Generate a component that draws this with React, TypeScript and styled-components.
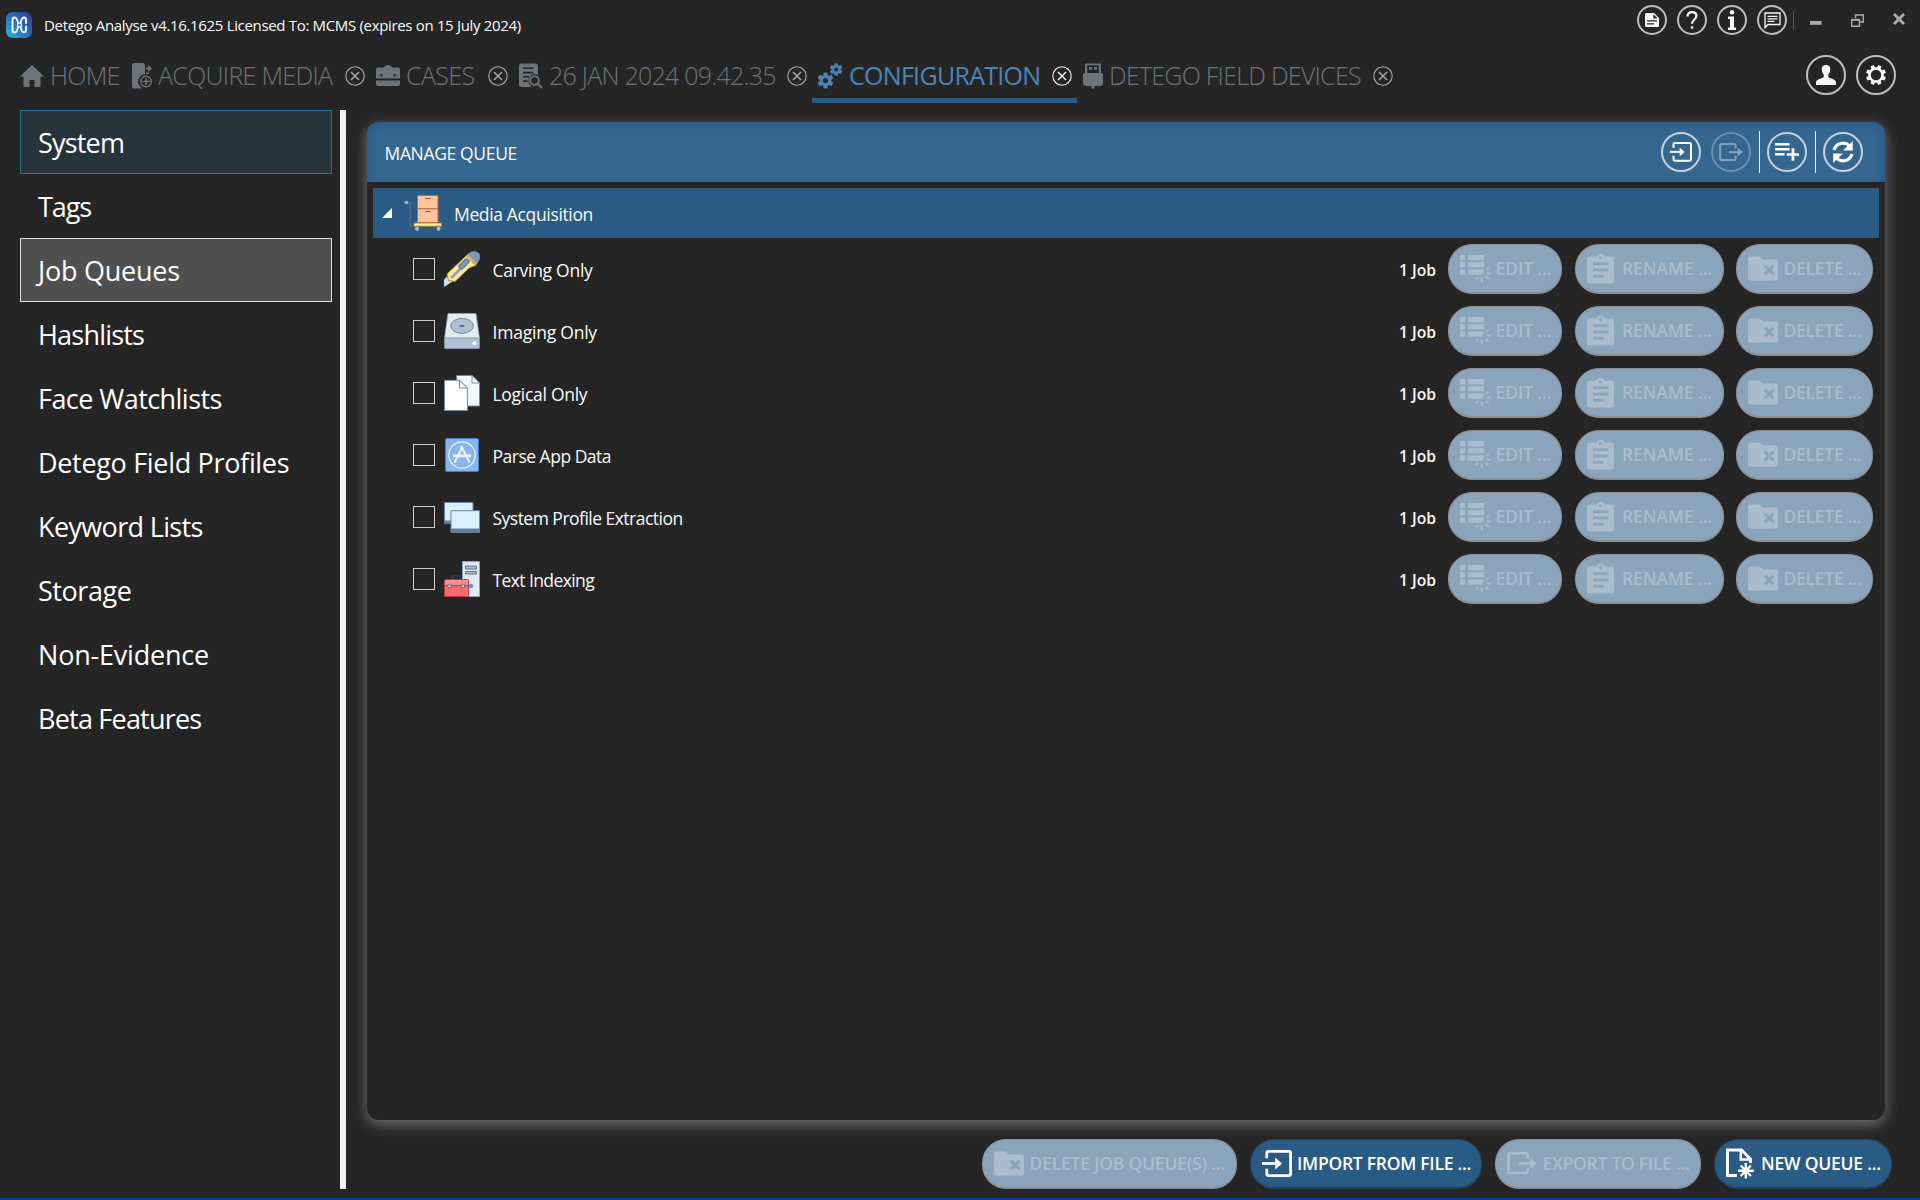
import React from "react";
import styled, { createGlobalStyle, css } from "styled-components";

const GlobalStyle = createGlobalStyle`
  * { box-sizing: border-box; }
  body {
    margin: 0;
    background: #252525;
    color: #fafafa;
    font-family: "Open Sans", "Noto Sans", sans-serif;
    overflow: hidden;
  }
  svg { display: block; flex: none; }
`;

const Window = styled.div`
  width: 1920px;
  height: 1200px;
  display: flex;
  flex-direction: column;
  background: #252525;
  border-bottom: 2px solid #0b3cae;
`;

const Text = styled.span<{ $track?: number }>`
  white-space: nowrap;
  letter-spacing: ${(p) => p.$track ?? 0}px;
`;

/* ---------- title bar ---------- */
const TitleBar = styled.header`
  height: 50px;
  flex: none;
  display: flex;
  justify-content: space-between;
  padding: 0 15px 0 6px;
`;
const Brand = styled.div`
  display: flex;
  align-items: center;
  gap: 12px;
  font-size: 15px;
`;
const WindowTools = styled.div`
  height: 40px;
  display: flex;
  align-items: center;
  gap: 10px;
`;
const Ring = styled.button<{ $size: number; $dim?: boolean }>`
  width: ${(p) => p.$size}px;
  height: ${(p) => p.$size}px;
  flex: none;
  padding: 0;
  display: grid;
  place-items: center;
  border: 2px solid rgba(255, 255, 255, 0.7);
  border-radius: 50%;
  background: transparent;
  color: #fafafa;
  opacity: ${(p) => (p.$dim ? 0.4 : 1)};
`;
const WindowButtons = styled.div`
  display: flex;
  align-items: center;
  margin-left: -4px;
  color: #aaa;
  svg + svg { margin-left: 29px; }
`;
const ToolDivider = styled.span`
  width: 1px;
  height: 19px;
  margin-right: 16px;
  background: #5c5c5c;
`;

/* ---------- tab strip ---------- */
const TabBar = styled.nav`
  height: 60px;
  flex: none;
  display: flex;
  justify-content: space-between;
  padding: 0 24px 0 14px;
`;
const Tabs = styled.div`
  display: flex;
  padding-top: 4px;
`;
const Tab = styled.div<{ $width: number; $active?: boolean }>`
  width: ${(p) => p.$width}px;
  height: 49px;
  display: flex;
  align-items: center;
  gap: 6px;
  padding: 0 5px 0 6px;
  border-bottom: 5px solid ${(p) => (p.$active ? "#2a5b84" : "transparent")};
  color: ${(p) => (p.$active ? "#4b84b8" : "#6e7479")};
  font-size: 25px;
  font-weight: ${(p) => (p.$active ? 400 : 300)};
  line-height: 1;
`;
const TabLabel = styled(Text)`
  padding-bottom: 2px;
`;
const TabClose = styled.span<{ $active?: boolean }>`
  margin-left: auto;
  color: ${(p) => (p.$active ? "#f0f0f0" : "#a8a8a8")};
`;
const AccountTools = styled.div`
  display: flex;
  gap: 10px;
  padding-top: 5px;
`;

/* ---------- body ---------- */
const Body = styled.div`
  flex: 1;
  display: flex;
  min-height: 0;
`;
const Sidebar = styled.aside`
  width: 346px;
  height: 1079px;
  flex: none;
  padding: 0 8px 0 20px;
  border-right: 6px solid #f0f0f0;
`;
const SideItem = styled.div<{ $state?: "selected" | "hover" }>`
  height: 64px;
  display: flex;
  align-items: center;
  padding-left: 17px;
  border: 1px solid transparent;
  font-size: 27px;
  color: #fff;
  ${(p) => p.$state === "hover" && css`background: #27343b; border-color: #26769c;`}
  ${(p) => p.$state === "selected" && css`background: #505050; border-color: #dcdcdc;`}
`;
const Main = styled.main`
  flex: 1;
  display: flex;
  flex-direction: column;
  padding: 12px 28px 0 21px;
`;
const Panel = styled.section`
  height: 998px;
  margin-right: 7px;
  border-radius: 12px;
  background: #252525;
  box-shadow: 0 4px 14px rgba(150, 150, 150, 0.7);
`;
const PanelHeader = styled.div`
  height: 60px;
  display: flex;
  align-items: center;
  justify-content: space-between;
  padding: 0 22px 0 17.5px;
  border-radius: 12px 12px 0 0;
  background: #356690;
  box-shadow: inset 0 5px 10px -3px #2a5b84, inset 5px 0 9px -5px #2a5b84, inset -5px 0 9px -5px #2a5b84;
  font-size: 17.5px;
`;
const PanelTitle = styled(Text)`
  padding-top: 2px;
`;
const PanelTools = styled.div`
  display: flex;
  align-items: center;
  gap: 10px;
`;
const PanelDivider = styled.span`
  width: 1px;
  height: 42px;
  margin: 0 -3px 0 -2px;
  background: #f4f4f4;
`;
const QueueList = styled.div`
  padding: 6px 6px 0;
`;
const GroupRow = styled.div`
  height: 50px;
  display: flex;
  align-items: center;
  padding-left: 9px;
  background: #2a5b84;
  font-size: 17.5px;
  svg + svg { margin: 0 12px 0 12px; }
`;
const Row = styled.div`
  height: 62px;
  display: flex;
  align-items: center;
  padding: 0 6px 0 40px;
  font-size: 17.5px;
`;
const Checkbox = styled.span`
  width: 22px;
  height: 22px;
  margin-right: 9px;
  border: 1px solid #cfcfcf;
`;
const RowName = styled.span`
  flex: 1;
  padding: 2px 0 0 12.5px;
`;
const JobCount = styled.span`
  padding-top: 2px;
  margin-right: 12px;
  font-size: 15.7px;
  font-weight: 600;
`;
const RowActions = styled.div`
  display: flex;
  gap: 12.5px;
`;
const Pill = styled.button<{ $width: number; $gap?: number; $primary?: boolean }>`
  width: ${(p) => p.$width}px;
  height: 50px;
  flex: none;
  display: flex;
  align-items: center;
  gap: ${(p) => p.$gap ?? 5.5}px;
  padding: 0 0 1px 11px;
  border: 1px solid;
  border-radius: 24px;
  font: 600 17.5px "Open Sans", "Noto Sans", sans-serif;
  ${(p) =>
    p.$primary
      ? css`background: #2a5b84; border-color: #264358; border-bottom-width: 2px; color: #fff;`
      : css`background: #8aa4bc; border-color: #8e9194; border-bottom-width: 2px; color: #abbdcd;`}
`;
const Footer = styled.footer`
  display: flex;
  justify-content: flex-end;
  gap: 13px;
  padding-top: 19px;
`;

/* ---------- icons ---------- */
const LogoIcon = () => (
  <svg width="26" height="26" viewBox="0 0 26 26">
    <defs>
      <linearGradient id="logo" x1="0" y1="1" x2="1" y2="0">
        <stop offset="0" stopColor="#27b4ea" />
        <stop offset=".5" stopColor="#2a70bd" />
        <stop offset="1" stopColor="#38348c" />
      </linearGradient>
    </defs>
    <rect width="26" height="26" rx="6.5" fill="url(#logo)" />
    <g fill="none" stroke="#f5faff" strokeWidth="1.9" strokeLinecap="round" strokeLinejoin="round">
      <path d="M6.500 18V8c0-3.300 3.500-3.300 4.500-.5.8 2.500 1 3.800 2.500 5.300s1.300 3.200 2 5.200c1 3.300 4.500 3 4.500 0v-3.500" />
      <path d="M6.500 18c0 3.300 3.500 3.300 4.500.5.800-2.500 1-4.200 2.500-5.700s1.300-3 2-5c1-3.300 4.500-3 4.500 0V11" />
    </g>
    <circle cx="13.500" cy="13" r="1.900" fill="#2b6cb8" stroke="#f5faff" strokeWidth="1.300" />
  </svg>
);
const HomeIcon = () => (
  <svg width="24" height="22" viewBox="0 0 24 22" fill="currentColor">
    <path d="M12 0 24 11.500h-3.500V22h-6v-7h-5v7h-6V11.500H0z" />
  </svg>
);
const AcquireIcon = () => (
  <svg width="20" height="26" viewBox="0 0 20 26" fill="currentColor">
    <path d="M2.500 0h8A2.500 2.500 0 0 1 13 2.500V11.500A7 7 0 0 0 9.500 24.500V25.500H2.500A2.500 2.500 0 0 1 0 23V2.500A2.500 2.500 0 0 1 2.500 0z" />
    <path d="M14 4.500h2V2L20 5.500 16 9V6.500h-2zM14 9.500h3v1.500h-3z" />
    <circle cx="14" cy="18.500" r="5.300" fill="none" stroke="currentColor" strokeWidth="1.400" />
    <path d="M13.200 15h1.600v2.700h2.700v1.600h-2.700V22h-1.600v-2.700h-2.700v-1.600h2.700z" />
  </svg>
);
const CaseIcon = () => (
  <svg width="24" height="22" viewBox="0 0 24 22" fill="currentColor">
    <path fillRule="evenodd" d="M8 2.500Q8 1 9.500 1h1V0h3v1h1Q16 1 16 2.500h6a2 2 0 0 1 2 2V13.500H0v-9a2 2 0 0 1 2-2zM4.500 9v2.500h1.800V9zM17.700 9v2.500h1.800V9z" />
    <path d="M0 15.500h24V19a2 2 0 0 1-2 2H2a2 2 0 0 1-2-2z" />
  </svg>
);
const ReportIcon = () => (
  <svg width="24" height="26" viewBox="0 0 24 26" fill="currentColor">
    <path fillRule="evenodd" d="M2.500.5h14A2.500 2.500 0 0 1 19 3v9a6.500 6.500 0 0 0-7.500 10.500l1 1.500h-10A2.500 2.500 0 0 1 0 21.500V3A2.500 2.500 0 0 1 2.500.5zM4 4.500v1.600h10.500V4.500zM4 8.800v1.600h10.500V8.800zM4 13v1.600h6V13zM4 17.300v1.600h4.500v-1.600z" />
    <circle cx="15.500" cy="17.500" r="4.300" fill="none" stroke="currentColor" strokeWidth="2" />
    <path d="m18.500 20.500 4.500 4.500" stroke="currentColor" strokeWidth="2.200" />
  </svg>
);
const Cog = ({ x, y, s }: { x: number; y: number; s: number }) => (
  <g transform={`translate(${x} ${y}) scale(${s})`}>
    <circle r="4" fill="none" stroke="currentColor" strokeWidth="3" />
    {[0, 60, 120, 180, 240, 300].map((a) => (
      <path key={a} d="M-1.800-7.600h3.600l.6 3.200h-4.800z" fill="currentColor" transform={`rotate(${a})`} />
    ))}
  </g>
);
const CogsIcon = () => (
  <svg width="25" height="26" viewBox="0 0 25 26">
    <Cog x={7.5} y={17.5} s={1.05} />
    <Cog x={18.2} y={6.5} s={0.83} />
  </svg>
);
const UsbIcon = () => (
  <svg width="20" height="26" viewBox="0 0 20 26" fill="currentColor">
    <path fillRule="evenodd" d="M2 .5h16V10h.3a2 2 0 0 1 1.700 2v8a3 3 0 0 1-3 3h-5.500v2.500h-3V23H3a3 3 0 0 1-3-3v-8a2 2 0 0 1 2-2zM4.200 2.300V10h11.600V2.300zM6 4h3v2.700H6zM11 4h3v2.700h-3z" />
  </svg>
);
const CloseIcon = () => (
  <svg width="20" height="20" viewBox="0 0 20 20" fill="none" stroke="currentColor">
    <circle cx="10" cy="10" r="9.200" strokeWidth="1.100" />
    <path d="m6 6 8 8M14 6l-8 8" strokeWidth="1.500" />
  </svg>
);
const NoteIcon = () => (
  <svg width="14" height="14" viewBox="0 0 14 14" fill="currentColor">
    <path fillRule="evenodd" d="M1.500 0H9l5 5v7.500a1.500 1.500 0 0 1-1.500 1.500h-11A1.500 1.500 0 0 1 0 12.500v-11A1.500 1.500 0 0 1 1.500 0zM8.300 1.200V5.600h4.400zM2 7.200v1.300h10V7.200zM2 10.300v1.300h7v-1.300z" />
  </svg>
);
const HelpIcon = () => (
  <svg width="12" height="19" viewBox="0 0 12 19" fill="none" stroke="currentColor" strokeWidth="2.300">
    <path d="M1.500 5.500C1.500 2.700 3.300 1.200 6 1.200s4.400 1.500 4.400 3.800c0 3.300-4.400 3.800-4.400 7.800" />
    <path d="M4.800 16.500h2.500" strokeWidth="2.400" />
  </svg>
);
const InfoIcon = () => (
  <svg width="10" height="20" viewBox="0 0 10 20" fill="currentColor">
    <circle cx="5" cy="2.200" r="2.200" />
    <path d="M1 6.500h6V17.500h2V20H1v-2.500h2V9H1z" />
  </svg>
);
const ChatIcon = () => (
  <svg width="17" height="17" viewBox="0 0 17 17" fill="none" stroke="currentColor">
    <path d="M1 1h15v11.500H4L1 15.800z" strokeWidth="1.300" />
    <path d="M3.500 4.300h10M3.500 6.800h10M3.500 9.300h7" strokeWidth="1.200" />
  </svg>
);
const MinimiseIcon = () => (
  <svg width="12" height="13" viewBox="0 0 12 13"><path d="M0 7h11.500v3.800H0z" fill="currentColor" /></svg>
);
const RestoreIcon = () => (
  <svg width="13" height="13" viewBox="0 0 13 13" fill="none" stroke="currentColor">
    <path d="M4.500 4V.9H12.400V8H9" strokeWidth="1.500" />
    <path d="M.7 5.700h7.800v6.500H.7z" strokeWidth="1.400" />
    <path d="M.5 5.800h8" strokeWidth="2" />
  </svg>
);
const QuitIcon = () => (
  <svg width="12" height="15" viewBox="0 0 12 15"><path d="m1 1 10 10M11 1 1 11" stroke="currentColor" strokeWidth="3" /></svg>
);
const UserIcon = () => (
  <svg width="20" height="20" viewBox="0 0 20 20" fill="currentColor">
    <path d="M10 0c3 0 4.500 2 4.300 4.800C14.100 7.500 13 8.800 12.300 9.600v2.400c1 1.500 7.700 2 7.700 5.500V20H0v-2.500C0 14 6.700 13.500 7.700 12V9.600C7 8.800 5.900 7.500 5.700 4.800 5.500 2 7 0 10 0z" />
  </svg>
);
const GearIcon = () => (
  <svg width="20" height="20" viewBox="-10 -10 20 20">
    <circle r="6.500" fill="none" stroke="currentColor" strokeWidth="2.600" />
    {[22.5, 67.5, 112.5, 157.5, 202.5, 247.5, 292.5, 337.5].map((a) => (
      <path key={a} d="M-1.700-10h3.400l.4 3.200h-4.200z" fill="currentColor" transform={`rotate(${a})`} />
    ))}
  </svg>
);
const ImportIcon = ({ size = 22 }: { size?: number }) => (
  <svg width={size} height={size * 0.9} viewBox="0 0 30 27" fill="none" stroke="currentColor">
    <path d="M4.800 8.200V3.200Q4.800 1.400 6.600 1.400H26.800Q28.600 1.400 28.600 3.200V23.800Q28.600 25.600 26.800 25.600H6.600Q4.800 25.600 4.800 23.800V18.800" strokeWidth="2.800" />
    <path d="M0 13.500h15" strokeWidth="2.800" />
    <path d="M13.200 7.500 20 13.500l-6.800 6z" fill="currentColor" stroke="none" />
  </svg>
);
const ExportIcon = ({ size = 24 }: { size?: number }) => (
  <svg width={size} height={size * 0.76} viewBox="0 0 30 23" fill="none" stroke="currentColor">
    <path d="M20.700 7V3Q20.700 1.300 19 1.300H3Q1.300 1.300 1.300 3V19.800Q1.300 21.500 3 21.500H19Q20.700 21.500 20.700 19.800V16" strokeWidth="2.600" />
    <path d="M12 11.500h13" strokeWidth="2.600" />
    <path d="M23.500 6 30 11.500 23.500 17z" fill="currentColor" stroke="none" />
  </svg>
);
const AddListIcon = () => (
  <svg width="24" height="18" viewBox="0 0 24 18" fill="currentColor">
    <path d="M0 0h14.500v2.500H0zM0 5h14.500v2.500H0zM0 10h9.500v2.500H0zM16.600 5.200h2.700v5H24v2.600h-4.700v5h-2.700v-5h-4.800v-2.600h4.800z" />
  </svg>
);
const RefreshIcon = () => (
  <svg width="22" height="24" viewBox="0 0 22 24">
    <g fill="none" stroke="currentColor" strokeWidth="3.200">
      <path d="M2 10A9.200 9.200 0 0 1 17.500 6" />
      <path d="M20 14A9.200 9.200 0 0 1 4.500 18" />
    </g>
    <path d="M20.800 1v9.500H11zM1.200 23v-9.500H11z" fill="currentColor" />
  </svg>
);
const EditIcon = () => (
  <svg width="31" height="27" viewBox="0 0 31 27" fill="currentColor">
    <path d="M0 0h5.200v5.200H0zM8 0h16v5.200H8zM0 7.300h5.200v5H0zM8 7.300h16v5H8zM0 14.500h5.200v5.200H0zM8 14.500h16v2.200l-1.500 3H8z" />
    <path d="m26.200 15 2.300-2.200M27 18.500h3.500M26 21.800l2.500 2.200M21.800 22.800V27M18 22l-2.300 2.500" stroke="currentColor" strokeWidth="2" />
  </svg>
);
const RenameIcon = () => (
  <svg width="27" height="31" viewBox="0 0 27 31" fill="currentColor">
    <path fillRule="evenodd" d="M2.500 3.500H9.500a4.200 4.200 0 0 1 8 0h7a2.500 2.500 0 0 1 2.500 2.500v22a2.500 2.500 0 0 1-2.500 2.500h-22A2.500 2.500 0 0 1 0 28V6a2.500 2.500 0 0 1 2.500-2.500zM13.500 3a1.600 1.600 0 1 0 0 3.200 1.600 1.600 0 0 0 0-3.200zM6 9.300v3h15.500v-3zM6 15.500v3h15.500v-3zM6 21.700v3h10.500v-3z" />
  </svg>
);
const DeleteIcon = () => (
  <svg width="30" height="25" viewBox="0 0 30 25" fill="currentColor">
    <path fillRule="evenodd" d="M2.500.5H11.500L15 3.500H27.500A2.500 2.500 0 0 1 30 6V22a2.500 2.500 0 0 1-2.500 2.500h-25A2.500 2.500 0 0 1 0 22V3A2.500 2.500 0 0 1 2.500.5zM15.700 10.800l3.200 3.200-3.200 3.200 2.300 2.300 3.200-3.200 3.200 3.200 2.300-2.300-3.200-3.200 3.200-3.200-2.300-2.300-3.200 3.200L18 8.500z" />
  </svg>
);
const NewIcon = () => (
  <svg width="29" height="31" viewBox="0 0 29 31" fill="none" stroke="currentColor">
    <path d="M11 27.500H1.500V2H15.500L24.500 11v4" strokeWidth="2.900" />
    <path d="M14.800 2v9.500H24.500" strokeWidth="2.500" />
    <path d="M19.800 15v15.500M12 22.700h15.800M14.700 17.500l10.200 10.500M24.900 17.500l-10.200 10.500" strokeWidth="2.400" />
  </svg>
);
const ExpanderIcon = () => (
  <svg width="10" height="10" viewBox="0 0 10 10"><path d="M10 0v10H0z" fill="#fafafa" /></svg>
);
const TrolleyIcon = () => (
  <svg width="38" height="36" viewBox="0 0 38 36">
    <path d="M2.500 7.500H6V29q0 2 2.500 2h2" fill="none" stroke="#56718d" strokeWidth="1.200" />
    <circle cx="2.300" cy="7.500" r="1.800" fill="#a5b7ca" />
    <path d="M13.500.5h20.500v27H13.500z" fill="#ffc49c" stroke="#b86b46" />
    <path d="M13.500 13.700h20.500M21 3.500h6M21 16.500h6" stroke="#a85c3a" strokeWidth="1.100" />
    <path d="M10 28h27.500v3.200H10z" fill="#fff0a0" stroke="#b58a2c" strokeWidth=".9" />
    <circle cx="13" cy="33.800" r="2.100" fill="#a9bdd3" />
    <circle cx="34.500" cy="33.800" r="2.100" fill="#a9bdd3" />
  </svg>
);
const KnifeIcon = () => (
  <svg width="36" height="36" viewBox="0 0 36 36">
    <path d="M0 28.500 3.500 25l5 5.500L0 36z" fill="#c9dcea" />
    <path d="M3 23 22.500 4.500 31.500 14.500 25 17 11 30.500 4.500 29.500z" fill="#ffe9a0" stroke="#b08a33" strokeWidth="1" strokeLinejoin="round" />
    <path d="M22.500 4.500Q26 0 31 .3q5 1 5 5.200 0 4.500-4.500 9z" fill="#7f99b5" />
    <path d="M22.500 4.500 31.500 14.500l1.500-1.700-9-9.500z" fill="#e0b44c" />
    <path d="M8 26 19 15.500" stroke="#92a9bf" strokeWidth="3" strokeLinecap="round" />
    <path d="m17.500 15.500 5-5" stroke="#5a7390" strokeWidth="6" strokeLinecap="round" />
    <path d="m17.500 15.500 5-5" stroke="#7f99b5" strokeWidth="3.800" strokeLinecap="round" />
  </svg>
);
const DiskIcon = () => (
  <svg width="36" height="36" viewBox="0 0 36 36">
    <path d="M5 .5h26q1 0 1.200 1L35.500 25H.5L3.800 1.500Q4 .5 5 .5z" fill="#e1edf3" stroke="#8ea2b5" strokeWidth=".7" />
    <path d="M.4 25h35.200v9.500q0 1.200-1.200 1.200H1.600Q.4 35.700.4 34.500z" fill="#b1c1d5" stroke="#8092a8" strokeWidth=".7" />
    <ellipse cx="18" cy="12.900" rx="11.300" ry="7.500" fill="#b1c1d5" stroke="#71869d" />
    <ellipse cx="18" cy="12.900" rx="2.600" ry="1.200" fill="#60758c" />
    <circle cx="30.500" cy="30.200" r="2" fill="#fff" />
  </svg>
);
const PagesIcon = () => (
  <svg width="36" height="36" viewBox="0 0 36 36" stroke="#73899f">
    <path d="M12.700.5H28l7.500 7.500v23H12.700z" fill="#f1f9ff" />
    <path d="M28 .5V8h7.500z" fill="#fff" />
    <path d="M.5 5.300H15.500L23.400 13v22.500H.5z" fill="#fff" />
    <path d="M15.500 5.300V13h7.900z" fill="#fff" />
  </svg>
);
const AppIcon = () => (
  <svg width="36" height="36" viewBox="0 0 36 36">
    <rect x="1.500" y="1.500" width="33" height="33" rx="1.500" fill="#87b5ef" stroke="#467fc8" />
    <g fill="none" stroke="#eef6ff">
      <circle cx="18" cy="18" r="13.200" strokeWidth="1.200" />
      <path d="m10.500 25.500 8-15.500M17 9l8.500 16.500" strokeWidth="2" />
      <path d="M9 18.800h18" strokeWidth="2.800" />
    </g>
  </svg>
);
const ScreensIcon = () => (
  <svg width="36" height="36" viewBox="0 0 36 36">
    <path d="M.5 3.500h28.500v21H.5z" fill="#d9f0ff" stroke="#6f879f" />
    <path d="M0 21.500h7v3.500H0z" fill="#66809a" />
    <path d="M7 11.700h28.500v21.500H7z" fill="#d9f0ff" stroke="#6f879f" />
    <path d="M6.500 29.500H36v4H6.500z" fill="#66809a" />
  </svg>
);
const ToolboxIcon = () => (
  <svg width="36" height="36" viewBox="0 0 36 36">
    <path d="M18.500.5h17v35h-17z" fill="#dfeaf1" stroke="#8ba0b5" />
    <path d="M21.500 5h11v3h-11zM21.500 10.500h11v2.500h-11z" fill="#a9bbcd" stroke="#54708e" strokeWidth=".9" />
    <path d="M8.500 18.500v-3.700h7.500v3.700" fill="none" stroke="#343c48" strokeWidth="1.700" />
    <path d="M.5 20q0-1.500 1.500-1.500h21q1.500 0 1.500 1.500v15.500H.5z" fill="#f96a6c" stroke="#b9383c" strokeWidth=".9" />
    <path d="M1 20q0-1 1-1h21q1 0 1 1v4.500H1z" fill="#f98e8d" />
    <path d="M.5 24.700h24" stroke="#b9383c" />
    <path d="M4 23.300h3v3.200H4zM17.500 23.300h3v3.200h-3z" fill="#b7d3e6" stroke="#4d6e8d" strokeWidth=".8" />
    <circle cx="27" cy="25" r="2.300" fill="#5e93d8" />
  </svg>
);

/* ---------- data ---------- */
type Tracked = { label: string; track: number };
const tabs: (Tracked & { width: number; icon: React.ReactNode; closable?: boolean; active?: boolean })[] = [
  { label: "HOME", track: -0.7, width: 112, icon: <HomeIcon /> },
  { label: "ACQUIRE MEDIA", track: -0.7, width: 244, icon: <AcquireIcon />, closable: true },
  { label: "CASES", track: -0.6, width: 143, icon: <CaseIcon />, closable: true },
  { label: "26 JAN 2024 09.42.35", track: -0.75, width: 299, icon: <ReportIcon />, closable: true },
  { label: "CONFIGURATION", track: -0.7, width: 265, icon: <CogsIcon />, closable: true, active: true },
  { label: "DETEGO FIELD DEVICES", track: -0.75, width: 321, icon: <UsbIcon />, closable: true },
];
const sections: (Tracked & { state?: "selected" | "hover" })[] = [
  { label: "System", track: -0.8, state: "hover" },
  { label: "Tags", track: -1.1 },
  { label: "Job Queues", track: -0.25, state: "selected" },
  { label: "Hashlists", track: -0.8 },
  { label: "Face Watchlists", track: -0.55 },
  { label: "Detego Field Profiles", track: -0.32 },
  { label: "Keyword Lists", track: -0.65 },
  { label: "Storage", track: -0.45 },
  { label: "Non-Evidence", track: -0.2 },
  { label: "Beta Features", track: -0.78 },
];
const queues: (Tracked & { icon: React.ReactNode })[] = [
  { label: "Carving Only", track: -0.28, icon: <KnifeIcon /> },
  { label: "Imaging Only", track: -0.22, icon: <DiskIcon /> },
  { label: "Logical Only", track: -0.28, icon: <PagesIcon /> },
  { label: "Parse App Data", track: -0.5, icon: <AppIcon /> },
  { label: "System Profile Extraction", track: -0.52, icon: <ScreensIcon /> },
  { label: "Text Indexing", track: -0.6, icon: <ToolboxIcon /> },
];

export default function App() {
  return (
    <>
      <GlobalStyle />
      <Window>
        <TitleBar>
          <Brand>
            <LogoIcon />
            <Text $track={-0.33}>Detego Analyse v4.16.1625 Licensed To: MCMS (expires on 15 July 2024)</Text>
          </Brand>
          <WindowTools>
            <Ring $size={30}><NoteIcon /></Ring>
            <Ring $size={30}><HelpIcon /></Ring>
            <Ring $size={30}><InfoIcon /></Ring>
            <Ring $size={30}><ChatIcon /></Ring>
            <WindowButtons>
              <ToolDivider />
              <MinimiseIcon />
              <RestoreIcon />
              <QuitIcon />
            </WindowButtons>
          </WindowTools>
        </TitleBar>

        <TabBar>
          <Tabs>
            {tabs.map((t) => (
              <Tab key={t.label} $width={t.width} $active={t.active}>
                {t.icon}
                <TabLabel $track={t.track}>{t.label}</TabLabel>
                {t.closable && <TabClose $active={t.active}><CloseIcon /></TabClose>}
              </Tab>
            ))}
          </Tabs>
          <AccountTools>
            <Ring $size={40}><UserIcon /></Ring>
            <Ring $size={40}><GearIcon /></Ring>
          </AccountTools>
        </TabBar>

        <Body>
          <Sidebar>
            {sections.map((s) => (
              <SideItem key={s.label} $state={s.state}><Text $track={s.track}>{s.label}</Text></SideItem>
            ))}
          </Sidebar>
          <Main>
            <Panel>
              <PanelHeader>
                <PanelTitle $track={-0.35}>MANAGE QUEUE</PanelTitle>
                <PanelTools>
                  <Ring $size={40}><ImportIcon /></Ring>
                  <Ring $size={40} $dim><ExportIcon /></Ring>
                  <PanelDivider />
                  <Ring $size={40}><AddListIcon /></Ring>
                  <PanelDivider />
                  <Ring $size={40}><RefreshIcon /></Ring>
                </PanelTools>
              </PanelHeader>
              <QueueList>
                <GroupRow>
                  <ExpanderIcon />
                  <TrolleyIcon />
                  <PanelTitle $track={-0.35}>Media Acquisition</PanelTitle>
                </GroupRow>
                {queues.map((q) => (
                  <Row key={q.label}>
                    <Checkbox />
                    {q.icon}
                    <RowName><Text $track={q.track}>{q.label}</Text></RowName>
                    <JobCount>1 Job</JobCount>
                    <RowActions>
                      <Pill $width={114} $gap={4.5}><EditIcon /><Text $track={-0.1}>EDIT ...</Text></Pill>
                      <Pill $width={149} $gap={8.5}><RenameIcon /><Text $track={-0.1}>RENAME ...</Text></Pill>
                      <Pill $width={137}><DeleteIcon /><Text $track={-0.25}>DELETE ...</Text></Pill>
                    </RowActions>
                  </Row>
                ))}
              </QueueList>
            </Panel>
            <Footer>
              <Pill $width={255}><DeleteIcon /><Text $track={-0.2}>DELETE JOB QUEUE(S) ...</Text></Pill>
              <Pill $width={232} $gap={5} $primary><ImportIcon size={30} /><Text $track={-0.27}>IMPORT FROM FILE ...</Text></Pill>
              <Pill $width={206}><ExportIcon size={30} /><Text $track={-0.27}>EXPORT TO FILE ...</Text></Pill>
              <Pill $width={178} $gap={6} $primary><NewIcon /><Text $track={-0.22}>NEW QUEUE ...</Text></Pill>
            </Footer>
          </Main>
        </Body>
      </Window>
    </>
  );
}
